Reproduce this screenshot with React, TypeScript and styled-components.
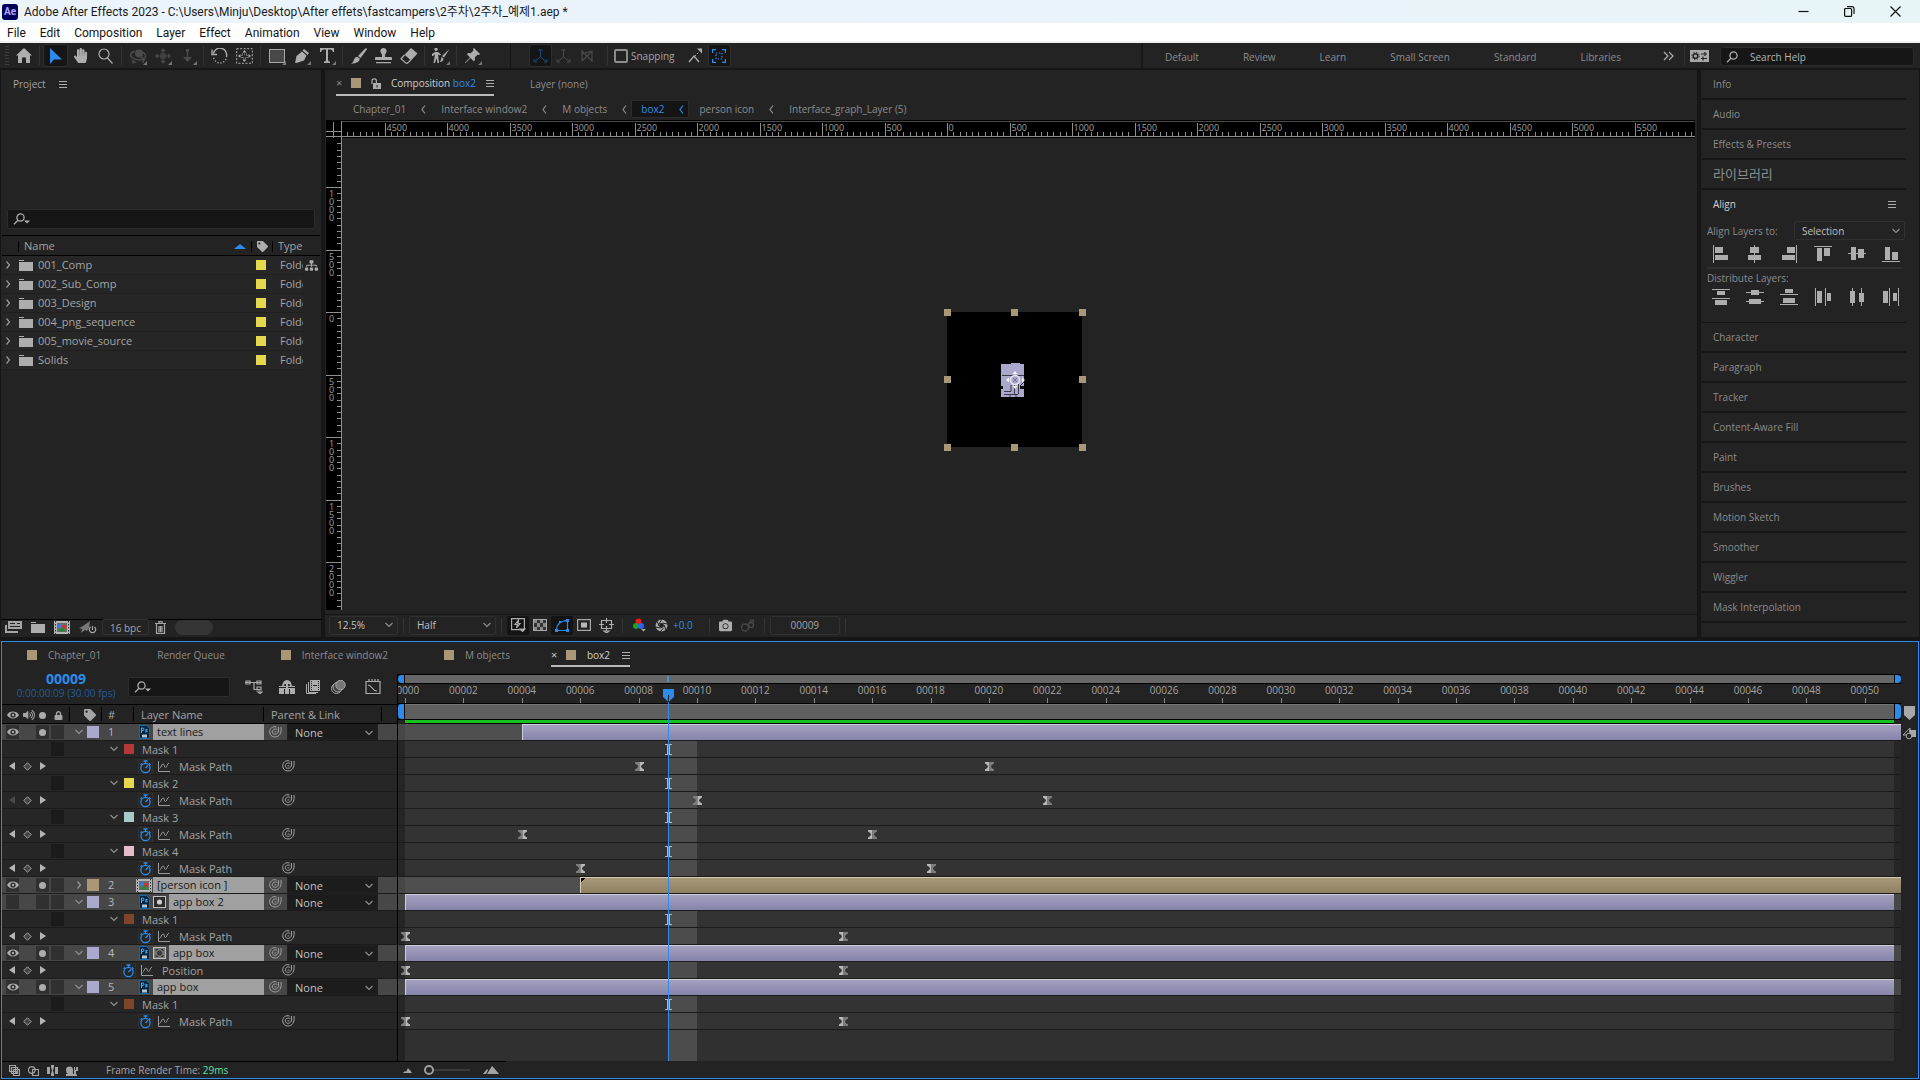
import React from 'react';
import styled, { createGlobalStyle, css } from 'styled-components';
import { FaHandPaper, FaTag, FaLock, FaCamera, FaSitemap, FaVolumeUp } from 'react-icons/fa';

const C = {
  gap: '#161616',
  panel: '#232323',
  row: '#262626',
  line: '#000000',
  field: '#161616',
  edge: '#303030',
  text: '#a4a4a4',
  dim: '#8c8c8c',
  bright: '#d0d0d0',
  icon: '#adadad',
  blue: '#2d8ceb',
  tan: '#a99778',
  lav: '#aaa8cc',
  yellow: '#e5d84e',
};

const Global = createGlobalStyle`
  *, *::before, *::after { box-sizing: border-box; }
  html, body, #root { height: 100%; margin: 0; }
  body { background: ${C.gap}; overflow: hidden; }
  body, button, input, select, table {
    font-family: 'Open Sans', 'Noto Sans CJK KR', sans-serif;
    font-size: 10px;
    line-height: 16px;
    color: ${C.text};
  }
  button { background: none; border: 0; padding: 0; white-space: nowrap; }
  a { color: inherit; text-decoration: none; }
  svg { display: block; flex: none; }
`;

const Shell = styled.div`
  height: 100vh;
  display: grid;
  grid-template-rows: 23px 20px 27px minmax(0, 567fr) 4px minmax(0, 438fr) 1px;
`;

/* ---------- window chrome ---------- */
const TitleBar = styled.header`
  display: flex;
  align-items: center;
  gap: 6px;
  padding: 0 2px;
  background: linear-gradient(90deg, #ebf4f9, #eaf3fb 50%, #e8f5f7);
  color: #1b1b1b;
  font-family: Roboto, 'Noto Sans CJK KR', sans-serif;
  font-size: 12px;
`;
const AppBadge = styled.span`
  width: 16px;
  height: 16px;
  border-radius: 3px;
  background: #00005b;
  color: #b3a6ff;
  font-size: 10px;
  font-weight: 700;
  line-height: 15px;
  text-align: center;
`;
const WinButtons = styled.div`
  margin-left: auto;
  display: flex;
`;
const WinButton = styled.button`
  width: 46px;
  height: 20px;
  display: grid;
  place-items: center;
  color: #111;
`;
const MenuBar = styled.nav`
  display: flex;
  align-items: center;
  gap: 14px;
  padding: 1px 0 0 7px;
  background: #fff;
  border-bottom: 2px solid #f0f1f0;
`;
const MenuItem = styled.button`
  color: #141414;
  font-family: Roboto, sans-serif;
  font-size: 12px;
`;

/* ---------- tool bar ---------- */
const ToolBar = styled.div`
  display: flex;
  align-items: stretch;
  background: ${C.panel};
  border-bottom: 2px solid ${C.gap};
`;
const Grip = styled.span`
  width: 4px;
  margin: 3px 2px 3px 5px;
  background: repeating-linear-gradient(#3c3c3c 0 1px, transparent 1px 3px);
`;
const Tool = styled.button<{ $on?: boolean; $off?: boolean; $more?: boolean; $w?: number }>`
  position: relative;
  width: ${(p) => p.$w || 25}px;
  margin: 1px 0;
  display: grid;
  place-items: center;
  border-radius: 3px;
  color: ${(p) => (p.$off ? '#4a4a4a' : C.icon)};
  ${(p) => p.$on && css`background: #151515; border: 1px solid #2e2e2e;`}
  ${(p) =>
    p.$more &&
    css`
      &::after {
        content: '';
        position: absolute;
        right: 3px;
        bottom: 2px;
        border: 2px solid transparent;
        border-right-color: #777;
        border-bottom-color: #777;
      }
    `}
`;
const Sep = styled.span<{ $full?: boolean }>`
  width: 1px;
  margin: ${(p) => (p.$full ? '0 3px' : '3px 3px')};
  background: ${(p) => (p.$full ? '#171717' : '#333')};
  flex: none;
`;
const Gap = styled.span<{ $w: number }>`
  width: ${(p) => p.$w}px;
  flex: none;
`;
const Snap = styled.label`
  display: flex;
  align-items: center;
  gap: 3px;
  padding: 0 8px 0 3px;
`;
const SnapBox = styled.input`
  appearance: none;
  width: 14px;
  height: 14px;
  margin: 0;
  border: 2px solid #8c8c8c;
  border-radius: 2px;
`;
const Spaces = styled.nav`
  margin-left: auto;
  display: flex;
  align-items: center;
  gap: 44px;
  padding: 2px 40px 0 22px;
  border-left: 2px solid #181818;
  color: ${C.dim};
`;
const HelpSearch = styled.label`
  width: 194px;
  height: 19px;
  margin: 4px 6px 0 7px;
  padding: 0 5px;
  display: flex;
  align-items: center;
  gap: 6px;
  background: ${C.field};
  border: 1px solid #2b2b2b;
  border-radius: 3px;
`;
const Field = styled.input`
  flex: 1;
  min-width: 0;
  padding: 0;
  border: 0;
  outline: 0;
  background: none;
  color: ${C.bright};
  &::placeholder { color: #b4b4b4; opacity: 1; }
`;

/* ---------- upper panels ---------- */
const Upper = styled.main`
  display: grid;
  grid-template-columns: 320px minmax(0, 1fr) 218px;
  gap: 4px;
  padding: 0 1px;
  min-height: 0;
`;
const Panel = styled.section`
  display: flex;
  flex-direction: column;
  min-height: 0;
  min-width: 0;
  background: ${C.panel};
`;
const ProjectHead = styled.div`
  height: 139px;
  padding: 6px 12px;
  display: flex;
  align-items: flex-start;
  gap: 13px;
`;
const MenuDots = styled.button`
  width: 8px;
  height: 16px;
  background: linear-gradient(${C.icon}, ${C.icon}) 0 5px / 8px 1px no-repeat,
    linear-gradient(${C.icon}, ${C.icon}) 0 8px / 8px 1px no-repeat,
    linear-gradient(${C.icon}, ${C.icon}) 0 11px / 8px 1px no-repeat;
`;
const SearchBox = styled.label<{ $w?: number }>`
  ${(p) => (p.$w ? css`width: ${p.$w}px;` : css`margin: 0 6px 6px;`)}
  height: 20px;
  padding: 0 5px;
  display: flex;
  align-items: center;
  background: ${C.field};
  border: 1px solid #2c2c2c;
  border-radius: 2px;
`;
const ProjectTable = styled.table`
  width: calc(100% - 2px);
  margin-left: 1px;
  border-collapse: collapse;
  table-layout: fixed;
  font-size: 11px;
  th {
    height: 20px;
    padding: 1px 5px 0;
    border-top: 1px solid ${C.line};
    border-bottom: 1px solid ${C.line};
    font-size: 11px;
    font-weight: 400;
    text-align: left;
  }
  td {
    height: 19px;
    padding: 0;
    border-bottom: 1px solid #1f1f1f;
    background: ${C.row};
    overflow: hidden;
    white-space: nowrap;
  }
  td:last-child { background: none; border: 0; }
`;
const HeadCell = styled.span<{ $bar?: boolean }>`
  display: flex;
  align-items: center;
  justify-content: space-between;
  height: 11px;
  margin-left: -5px;
  padding-left: ${(p) => (p.$bar ? 5 : 0)}px;
  border-left: 1px solid #000;
`;
const CellLine = styled.span<{ $pad?: number }>`
  display: flex;
  align-items: center;
  gap: 5px;
  padding-left: ${(p) => p.$pad || 0}px;
`;
const Swatch = styled.span<{ $c: string; $s?: number }>`
  display: block;
  width: ${(p) => p.$s || 10}px;
  height: ${(p) => p.$s || 10}px;
  background: ${(p) => p.$c};
  flex: none;
`;
const ProjectFoot = styled.div`
  margin-top: auto;
  height: 18px;
  display: flex;
  align-items: center;
  gap: 9px;
  padding: 0 0 3px 4px;
  border-top: 1px solid #000;
`;
const Depth = styled.button`
  width: 47px;
  height: 16px;
  margin: 0 -3px 0 -4px;
  border: 1px solid #303030;
  border-radius: 2px;
`;
const Pill = styled.span`
  width: 38px;
  height: 15px;
  border-radius: 8px;
  background: #353535;
`;

/* ---------- composition viewer ---------- */
const CompTabs = styled.div`
  height: 28px;
  display: flex;
  padding-left: 11px;
  gap: 36px;
  color: ${C.dim};
`;
const CompTab = styled.div`
  height: 26px;
  display: flex;
  align-items: center;
  gap: 10px;
  padding-top: 2px;
  border-bottom: 2px solid #b9b9b9;
  color: ${C.bright};
  b { font-weight: 400; color: ${C.blue}; }
`;
const PlainTab = styled.button`
  color: ${C.dim};
`;
const Close = styled.button`
  width: 5px;
  font-size: 11px;
  line-height: 12px;
  color: ${C.dim};
`;
const Crumbs = styled.nav`
  height: 22px;
  display: flex;
  align-items: center;
  padding-left: 28px;
  gap: 15px;
  color: ${C.dim};
`;
const HotCrumb = styled.a`
  display: flex;
  align-items: center;
  gap: 15px;
  height: 18px;
  margin: 0 -5px 0 -11px;
  padding: 0 4px 0 9px;
  background: #141414;
  border: 1px solid #2b2b2b;
  border-radius: 2px;
  color: ${C.blue};
`;
const Viewer = styled.div`
  flex: 1;
  min-height: 0;
  margin: 0 2px 4px 1px;
  display: grid;
  grid-template-columns: 16px minmax(0, 1fr);
  grid-template-rows: 17px minmax(0, 1fr);
  border-top: 1px solid #000;
  overflow: hidden;
`;
const RulerCell = styled.div`
  background: #000;
  overflow: hidden;
  min-width: 0;
  min-height: 0;
  text { font-size: 9px; fill: #a0a0a0; font-family: 'Open Sans', sans-serif; }
`;
const Stage = styled.div`
  position: relative;
  overflow: hidden;
`;
const CompFrame = styled.div`
  position: absolute;
  width: 135px;
  height: 135px;
  background: #000;
`;
const Handle = styled.span`
  position: absolute;
  width: 7px;
  height: 7px;
  margin: -3px 0 0 -3px;
  background: ${C.tan};
`;
const Art = styled.svg`
  position: absolute;
  left: 53px;
  top: 50px;
`;
const ViewFoot = styled.div`
  height: 23px;
  display: flex;
  align-items: center;
  padding: 0 0 2px 4px;
  border-top: 1px solid #161616;
`;
const FootSep = styled.span`
  width: 1px;
  height: 15px;
  margin: 0 5px;
  background: #343434;
`;
const Pick = styled.span<{ $w: number; $h?: number; $solid?: boolean }>`
  display: grid;
  align-items: center;
  width: ${(p) => p.$w}px;
  height: ${(p) => p.$h || 19}px;
  background: ${(p) => (p.$solid ? '#1c1c1c' : 'transparent')};
  border: 1px solid ${(p) => (p.$solid ? '#202020' : C.edge)};
  border-radius: ${(p) => (p.$solid ? 0 : 2)}px;
  > * { grid-area: 1 / 1; }
  > svg { justify-self: end; margin-right: 4px; pointer-events: none; }
`;
const Select = styled.select<{ $fs?: number }>`
  appearance: none;
  width: 100%;
  height: 100%;
  padding: 0 7px;
  border: 0;
  outline: 0;
  background: none;
  color: #c0c0c0;
  font-size: ${(p) => p.$fs || 10}px;
`;
const FootBtn = styled.button<{ $on?: boolean }>`
  width: 22px;
  height: 19px;
  display: grid;
  place-items: center;
  border-radius: 2px;
  color: ${C.icon};
  ${(p) => p.$on && css`background: #141414;`}
`;
const Exposure = styled.button`
  margin: 0 11px 0 1px;
  color: ${C.blue};
`;
const FrameBox = styled.button`
  width: 70px;
  height: 19px;
  border: 1px solid ${C.edge};
  border-radius: 2px;
`;

/* ---------- right column ---------- */
const SideList = styled.div`
  margin: 0 13px 0 1px;
`;
const SideItem = styled.button`
  display: block;
  width: 100%;
  height: 30px;
  padding: 0 0 1px 11px;
  text-align: left;
  color: ${C.dim};
  border-bottom: 2px solid ${C.gap};
`;
const SideKorean = styled(SideItem)`
  font-size: 13px;
  font-family: 'Noto Sans CJK KR', sans-serif;
`;
const AlignBox = styled.div`
  height: 133px;
  padding: 6px 0 0 5px;
  border-bottom: 1px solid ${C.gap};
`;
const AlignTop = styled.div`
  display: flex;
  justify-content: space-between;
  padding: 0 10px 0 6px;
  height: 25px;
  color: ${C.bright};
`;
const AlignTo = styled.label`
  display: flex;
  align-items: center;
  justify-content: space-between;
  padding-right: 1px;
  color: ${C.dim};
`;
const IconRow = styled.div`
  display: flex;
  gap: 16px;
  padding: 5px 0 4px 5px;
`;
const IconBtn = styled.button`
  width: 18px;
  height: 18px;
  color: ${C.icon};
`;
const DistLabel = styled.div`
  margin-right: 4px;
  padding-top: 1px;
  height: 16px;
  line-height: 16px;
  border-top: 2px solid #2f2f2f;
  color: ${C.dim};
`;

/* ---------- timeline ---------- */
const Timeline = styled.section`
  margin: 0 1px;
  display: flex;
  flex-direction: column;
  min-height: 0;
  border: 1px solid ${C.blue};
  background: ${C.panel};
`;
const TimeTabs = styled.div`
  height: 32px;
  display: flex;
  gap: 41px;
  padding-left: 10px;
`;
const TimeTab = styled.div<{ $on?: boolean }>`
  height: 25px;
  display: flex;
  align-items: center;
  padding-top: 2px;
  border-bottom: 2px solid ${(p) => (p.$on ? '#b9b9b9' : 'transparent')};
  button { color: ${(p) => (p.$on ? C.bright : C.dim)}; }
  ${Swatch} { margin-right: 11px; }
  ${MenuDots} { margin-left: 12px; }
`;
const CloseSlot = styled.span`
  width: 15px;
`;
const TimeBody = styled.div`
  flex: 1;
  min-height: 0;
  display: grid;
  grid-template-columns: 396px minmax(0, 1fr) 17px;
`;
const LeftCol = styled.div`
  border-right: 1px solid #000;
  display: flex;
  flex-direction: column;
`;
const Controls = styled.div`
  height: 30px;
  display: flex;
  align-items: center;
  padding: 0 0 5px 8px;
`;
const Clock = styled.button`
  width: 112px;
  margin-right: 6px;
  display: block;
  color: #235b99;
  line-height: 15px;
  strong { display: block; font-size: 14px; line-height: 14px; color: ${C.blue}; }
`;
const CtlIcons = styled.div`
  display: flex;
  align-items: center;
  margin-left: 15px;
  color: ${C.icon};
  button { color: inherit; }
`;
const Row = styled.div<{ $layer?: boolean }>`
  height: 17px;
  display: flex;
  align-items: center;
  border-bottom: 1px solid #1b1b1b;
  background: ${(p) => (p.$layer ? '#474747' : C.row)};
  color: ${(p) => (p.$layer ? '#b8b8b8' : C.text)};
  font-size: 11px;
`;
const HeadRow = styled.div`
  height: 20px;
  display: grid;
  grid-template-columns: 68px 32px 32px 130px 118px 1fr;
  align-items: center;
  border-top: 1px solid #000;
  border-bottom: 1px solid #000;
  font-size: 11px;
`;
const HeadPart = styled.span<{ $pad?: number; $gap?: number }>`
  display: flex;
  align-items: center;
  gap: ${(p) => p.$gap || 0}px;
  height: 14px;
  padding: 2px 0 0 ${(p) => p.$pad || 0}px;
  border-right: 1px solid #000;
  color: ${C.text};
`;
const Cell = styled.button<{ $bg?: string; $m?: number }>`
  width: 13px;
  height: 14px;
  margin-left: ${(p) => p.$m || 2}px;
  display: grid;
  place-items: center;
  background: ${(p) => p.$bg || 'transparent'};
  color: ${C.icon};
`;
const Dot = styled.span`
  width: 7px;
  height: 7px;
  border-radius: 50%;
  background: ${C.icon};
`;
const Twisty = styled.button<{ $m: number }>`
  width: 8px;
  margin-left: ${(p) => p.$m}px;
  display: grid;
  place-items: center;
`;
const Num = styled.span`
  width: 37px;
  padding-left: 9px;
`;
const Name = styled.span`
  flex: 1;
  height: 16px;
  padding-left: 4px;
  background: #a0a0a0;
  color: #181818;
  white-space: nowrap;
`;
const NameCol = styled.div<{ $wide?: boolean }>`
  width: 128px;
  padding-left: ${(p) => (p.$wide ? 0 : 3)}px;
  display: flex;
  align-items: center;
  gap: ${(p) => (p.$wide ? 1 : 3)}px;
`;
const PropText = styled.span`
  padding-top: 2px;
`;
const PropKeys = styled.span`
  display: flex;
  align-items: center;
  gap: 8px;
  width: 46px;
  padding-left: 7px;
`;
const Prop = styled.span<{ $indent: number }>`
  width: ${(p) => 234 - p.$indent}px;
  margin-left: ${(p) => p.$indent}px;
  display: flex;
  align-items: center;
  gap: 5px;
  ${PropText} { padding-left: 4px; }
`;
const WatchBox = styled.button`
  width: 15px;
  height: 15px;
  display: grid;
  place-items: center;
  border: 1px solid #303030;
`;

const Foot = styled.div`
  height: 17px;
  display: flex;
  align-items: center;
  width: 504px;
  padding-left: 7px;
  gap: 8px;
  border-top: 1px solid #000;
  em { font-style: normal; color: #5be0a6; }
`;
const FootNote = styled.span`
  width: 290px;
  padding-left: 20px;
  white-space: nowrap;
`;
const Zoom = styled.input`
  appearance: none;
  width: 46px;
  height: 10px;
  margin: 0 5px 0 4px;
  background: linear-gradient(#3a3a3a, #3a3a3a) 0 4px / 100% 2px no-repeat;
  &::-webkit-slider-thumb {
    appearance: none;
    width: 10px;
    height: 10px;
    border: 2px solid #9c9c9c;
    border-radius: 50%;
    background: ${C.panel};
  }
`;

const Tracks = styled.div`
  position: relative;
  display: flex;
  flex-direction: column;
  min-width: 0;
`;
const NavBar = styled.div<{ $h: number; $r: string; $bg: string }>`
  height: ${(p) => p.$h}px;
  display: flex;
  justify-content: space-between;
  border-top: 1px solid #000;
  border-bottom: 1px solid #000;
  background: linear-gradient(90deg, ${C.panel} 6px, transparent 6px calc(100% - 6px), ${C.panel} calc(100% - 6px)), ${(p) => p.$bg};
  overflow: hidden;
  &::before, &::after {
    content: '';
    width: 7px;
    background: ${C.blue};
    border-right: 1px solid #000;
    border-radius: ${(p) => p.$r} 0 0 ${(p) => p.$r};
  }
  &::after {
    border-right: 0;
    border-left: 1px solid #000;
    border-radius: 0 ${(p) => p.$r} ${(p) => p.$r} 0;
  }
`;
const Scale = styled.div`
  position: relative;
  height: 19px;
  overflow: hidden;
`;
const ScaleLane = styled.div`
  position: relative;
  margin: 0 7px;
  height: 100%;
`;
const Stamp = styled.span`
  position: absolute;
  top: 0;
  width: 30px;
  height: 19px;
  margin-left: -15px;
  line-height: 13px;
  text-align: center;
  &::after {
    content: '';
    position: absolute;
    left: 15px;
    bottom: 0;
    width: 1px;
    height: 5px;
    background: #8a8a8a;
  }
`;
const Green = styled.div`
  height: 4px;
  margin: 0 7px;
  background: #14c11f;
  border-bottom: 1px solid #000;
`;
const TrackRow = styled.div<{ $layer?: boolean; $fill?: boolean }>`
  ${(p) => (p.$fill ? css`flex: 1;` : css`height: 17px; border-bottom: 1px solid #1b1b1b;`)}
  padding: 0 7px;
  background: ${(p) => (p.$layer ? '#474747' : p.$fill ? '#232323' : C.row)};
`;
const Lane = styled.div<{ $layer?: boolean; $fill?: boolean }>`
  position: relative;
  height: 100%;
  background: ${(p) => (p.$layer ? '#4f4f4f' : p.$fill ? '#303030' : '#333')};
`;
const Bar = styled.span<{ $tan?: boolean; $over?: boolean }>`
  position: absolute;
  top: 0;
  bottom: 0;
  right: ${(p) => (p.$over ? '-7px' : '0')};
  border-top: 1px solid ${(p) => (p.$tan ? '#d6ccb8' : '#cfcede')};
  border-left: 1px solid ${(p) => (p.$tan ? '#d6ccb8' : '#cfcede')};
  background: ${(p) => (p.$tan ? 'linear-gradient(#a8987a, #8f8062)' : 'linear-gradient(#a3a0bf, #8784ab)')};
`;
const Notch = styled.i`
  display: block;
  width: 5px;
  height: 5px;
  background: linear-gradient(135deg, #000 50%, transparent 50%);
`;
const Shade = styled.span`
  position: absolute;
  top: 0;
  bottom: 0;
  background: #4c4c4c;
`;
const Mark = styled.span`
  position: absolute;
  top: 4px;
  margin-left: -4px;
`;
const BeamMark = styled(Mark)`
  top: 3px;
`;
const Playhead = styled.div`
  position: absolute;
  top: 2px;
  bottom: 0;
  width: 11px;
  margin-left: -5px;
  display: flex;
  flex-direction: column;
  align-items: center;
  &::before { content: ''; width: 2px; height: 6px; margin-bottom: 7px; background: #4c90d2; }
  &::after { content: ''; width: 1px; flex: 1; background: ${C.blue}; }
`;
const RightStrip = styled.div`
  display: flex;
  flex-direction: column;
  align-items: center;
  padding-top: 32px;
  gap: 7px;
`;

/* ---------- small drawings ---------- */
const Chev = ({ c = '#8f8f8f' }: { c?: string }) => (
  <svg width="8" height="6" viewBox="0 0 8 6" fill="none" stroke={c} strokeWidth="1.2"><path d="M.5 1 4 4.500 7.500 1" /></svg>
);
const ChevR = () => (
  <svg width="6" height="8" viewBox="0 0 6 8" fill="none" stroke="#9a9a9a" strokeWidth="1.2"><path d="M1.500.5 4.500 4 1.500 7.500" /></svg>
);
const ChevL = ({ c = '#8f8f8f' }: { c?: string }) => (
  <svg width="5" height="9" viewBox="0 0 5 9" fill="none" stroke={c} strokeWidth="1.2"><path d="M4 .5 1 4.500 4 8.500" /></svg>
);
const Lens = ({ more }: { more?: boolean }) => (
  <svg width="18" height="12" viewBox="0 0 18 12" fill="none" stroke={C.icon} strokeWidth="1.3">
    <circle cx="7.500" cy="4.500" r="3.600" /><path d="M5 7.200 1 11.200" />
    {more && <path d="M11 7.500h6L14 10.500z" fill={C.icon} stroke="none" />}
  </svg>
);
const Whip = () => (
  <svg width="13" height="12" viewBox="0 0 13 12" fill="none" stroke="#a2a2a2" strokeWidth="1">
    <path d="M7.500 1C3.500-.2.7 2.500.7 5.800c0 3.200 2.300 5.200 5.200 5.200 4.200 0 6.900-3.500 6.100-10" />
    <path d="M8.300 3.600C6.500 2.200 3.300 3.200 3.300 5.900c0 3.300 5.700 3.400 6.200-.9.200-1.500 0-2.700-.2-4" />
    <path d="M5.500 5.900h1.800" />
  </svg>
);
const Watch = () => (
  <svg width="13" height="14" viewBox="0 0 13 14" fill="none" stroke={C.blue} strokeWidth="1.3">
    <circle cx="6.500" cy="8" r="4.600" /><path d="M4.500 1h4M6.500 1v2.500M10 3.500l1.500 1.300M6.500 8l2.500-2.500M3 3.500 1.500 4.800" />
  </svg>
);
const Graph = () => (
  <svg width="12" height="11" viewBox="0 0 12 11" fill="none" stroke="#9a9a9a"><path d="M.5 0v10.500H12M1.500 7.500C3 7 3.500 3 5 3s1 3.500 2.500 3.500S9 2.500 11 2" /></svg>
);
const Eye = () => (
  <svg width="12" height="8" viewBox="0 0 12 8"><path d="M0 4C2.500-.6 9.500-.6 12 4 9.500 8.600 2.500 8.600 0 4z" fill={C.icon} /><circle cx="6" cy="4" r="2.600" fill="#262626" /><circle cx="6" cy="4" r="1.200" fill={C.icon} /></svg>
);
const Ps = () => (
  <svg width="11" height="14" viewBox="0 0 11 14">
    <path d="M.5.5h7l3 3v10H.5z" fill="#03253f" stroke="#0c6cae" />
    <path d="M2.500 8V3h1.200a1.200 1.200 0 0 1 0 2.500H2.500M8.500 4.500q-2-.6-2 .4t1.800 1.100q0 1.500-2.200.8" fill="none" stroke="#55b6ff" />
    <path d="M3 9.500h5v3H3z" fill="#b4c4d0" />
  </svg>
);
const CompIcon = () => (
  <svg width="16" height="13" viewBox="0 0 16 13">
    <path d="M0 0h16v13H0z" fill="#b5b5b5" /><path d="M1.500 0v13M14.500 0v13" stroke="#333" strokeDasharray="1.500 1.500" />
    <path d="M3 2h10v9H3z" fill="#6b6b6b" /><circle cx="6" cy="5" r="2.200" fill="#2f7de0" /><path d="M8 4h4v4H8z" fill="#e02b2b" /><path d="m8 5.500 3 5H5z" fill="#17922a" />
  </svg>
);
const Matte = ({ inv }: { inv?: boolean }) => (
  <svg width="13" height="14" viewBox="0 0 13 14">
    <rect x=".5" y="1.500" width="12" height="11" fill={inv ? '#777' : '#2b2b2b'} stroke="#c0c0c0" />
    <circle cx="6.500" cy="7" r="2.600" fill={inv ? '#3b3b3b' : '#d0d0d0'} />
    {inv && <path d="M3 5V3.500h2M8 3.500h2V5M10 9v1.500H8M5 10.500H3V9" fill="none" stroke="#333" />}
  </svg>
);
const Folder = () => (
  <svg width="14" height="11" viewBox="0 0 14 11"><path d="M0 0h5v1H0zM0 2h14v9H0z" fill="#adadad" /></svg>
);
const OpenLock = () => (
  <svg width="10" height="11" viewBox="0 0 10 11"><path d="M1 6V3a2.200 2.200 0 0 1 4.400 0v2" fill="none" stroke={C.icon} strokeWidth="1.200" /><path d="M2 5h8v6H2z" fill={C.icon} /><path d="M5.500 7h1v2.500h-1z" fill="#232323" /></svg>
);
const KeyNav = ({ first }: { first?: boolean }) => (
  <PropKeys>
    <svg width="6" height="8" viewBox="0 0 6 8"><path d="M6 0v8L0 4z" fill={first ? '#4a4a4a' : '#b5b5b5'} /></svg>
    <svg width="9" height="9" viewBox="0 0 9 9"><path d="M4.500.8 8.200 4.500 4.500 8.200.8 4.500z" fill="#444" stroke="#a5a5a5" /></svg>
    <svg width="6" height="8" viewBox="0 0 6 8"><path d="M0 0v8l6-4z" fill="#b5b5b5" /></svg>
  </PropKeys>
);
const Hourglass = ({ half }: { half?: string }) => (
  <svg width="9" height="9" viewBox="0 0 9 9">
    <path d="M0 0h4.500v9H0V7.500Q3 6 3 4.500T0 1.500z" fill={half === 'l' ? '#7d7d7d' : '#b8b8b8'} />
    <path d="M9 0H4.500v9H9V7.500Q6 6 6 4.500T9 1.500z" fill={half === 'r' ? '#7d7d7d' : '#b8b8b8'} />
  </svg>
);
const IBeam = () => (
  <svg width="9" height="11" viewBox="0 0 9 11" fill="none" stroke="#b5b5b5"><path d="M1 .5h7M1 10.500h7M3.500.5v10M5.500.5v10" /></svg>
);
const Axis = ({ c }: { c: string }) => (
  <svg width="15" height="15" viewBox="0 0 15 15" fill="none" stroke={c}><path d="M7.500 1v8M7.500 9 1.500 13.500M7.500 9l6 4.500M5.500 3l2-2 2 2M1 11v3h3M14 11v3h-3" /></svg>
);

const Box = ({ d, w = 16, h = 16, fill }: { d: string; w?: number; h?: number; fill?: boolean }) => (
  <svg width={w} height={h} viewBox={`0 0 ${w} ${h}`} fill={fill ? 'currentColor' : 'none'} stroke={fill ? 'none' : 'currentColor'} strokeWidth="1.200">
    <path d={d} />
  </svg>
);

/* ---------- data ---------- */
const FRAMES = 51;
const at = (f: number) => `${(f / FRAMES) * 100}%`;

type Item =
  | { kind: 'layer'; n: number; name: string; color: string; from: number; over?: boolean; comp?: boolean; matte?: 'on' | 'inv'; hidden?: boolean; closed?: boolean }
  | { kind: 'mask'; name: string; color: string }
  | { kind: 'prop'; name: string; keys: number[]; first?: boolean; shallow?: boolean };

const items: Item[] = [
  { kind: 'layer', n: 1, name: 'text lines', color: C.lav, from: 4, over: true },
  { kind: 'mask', name: 'Mask 1', color: '#b53839' },
  { kind: 'prop', name: 'Mask Path', keys: [8, 20] },
  { kind: 'mask', name: 'Mask 2', color: C.yellow },
  { kind: 'prop', name: 'Mask Path', keys: [10, 22], first: true },
  { kind: 'mask', name: 'Mask 3', color: '#a9cbc7' },
  { kind: 'prop', name: 'Mask Path', keys: [4, 16] },
  { kind: 'mask', name: 'Mask 4', color: '#e5bcc9' },
  { kind: 'prop', name: 'Mask Path', keys: [6, 18] },
  { kind: 'layer', n: 2, name: '[person icon ]', color: C.tan, from: 6, over: true, comp: true, closed: true },
  { kind: 'layer', n: 3, name: 'app box 2', color: C.lav, from: 0, matte: 'on', hidden: true },
  { kind: 'mask', name: 'Mask 1', color: '#7f452a' },
  { kind: 'prop', name: 'Mask Path', keys: [0, 15] },
  { kind: 'layer', n: 4, name: 'app box', color: C.lav, from: 0, matte: 'inv' },
  { kind: 'prop', name: 'Position', keys: [0, 15], shallow: true },
  { kind: 'layer', n: 5, name: 'app box', color: C.lav, from: 0 },
  { kind: 'mask', name: 'Mask 1', color: '#7f452a' },
  { kind: 'prop', name: 'Mask Path', keys: [0, 15] },
];

const folders = ['001_Comp', '002_Sub_Comp', '003_Design', '004_png_sequence', '005_movie_source', 'Solids'];
const menus = ['File', 'Edit', 'Composition', 'Layer', 'Effect', 'Animation', 'View', 'Window', 'Help'];
const spaces = ['Default', 'Review', 'Learn', 'Small Screen', 'Standard', 'Libraries'];
const sideTop = ['Info', 'Audio', 'Effects & Presets'];
const sideRest = ['Character', 'Paragraph', 'Tracker', 'Content-Aware Fill', 'Paint', 'Brushes', 'Motion Sketch', 'Smoother', 'Wiggler', 'Mask Interpolation'];

const alignIcons = [
  'M1 0h1v18H1zM3 2h8v6H3zM3 10h13v5H3z',
  'M8 0h1v18H8zM4 2h9v6H4zM2 10h13v5H2z',
  'M16 0h1v18h-1zM7 2h8v6H7zM2 10h13v5H2z',
  'M0 1h18v1H0zM3 3h5v13H3zM10 3h6v8h-6z',
  'M0 8h18v1H0zM3 2h5v13H3zM10 4h6v9h-6z',
  'M0 16h18v1H0zM3 2h5v13H3zM10 7h6v8h-6z',
];
const distIcons = [
  'M0 1h18v1H0zM5 3h8v4H5zM0 10h18v1H0zM3 12h12v5H3z',
  'M0 4h18v1H0zM5 2h8v5H5zM0 13h18v1H0zM3 11h12v5H3z',
  'M0 6h18v1H0zM5 1h8v4H5zM0 16h18v1H0zM3 10h12v5H3z',
  'M1 0h1v18H1zM3 3h5v12H3zM11 0h1v18h-1zM13 5h4v8h-4z',
  'M4 0h1v18H4zM2 3h5v12H2zM13 0h1v18h-1zM11 5h5v9h-5z',
  'M7 0h1v18H7zM1 3h5v12H1zM16 0h1v18h-1zM11 5h4v8h-4z',
];

/* 12.5% magnification: 500 comp pixels are 62.5 screen pixels */
const ORIGIN_X = 605;
const ORIGIN_Y = 174;
const STEP = 62.5;

const TopRuler = () => (
  <svg width="1360" height="17">
    {Array.from({ length: 216 }, (_, i) => i - 96).map((k) => {
      const x = Math.round(ORIGIN_X + (k * STEP) / 10) + 0.5;
      const major = k % 10 === 0;
      return (
        <g key={k}>
          <path d={`M${x} ${major ? 2 : 11}V15`} stroke="#8f8f8f" />
          {major && <text x={x + 1} y="10">{Math.abs(k * 50)}</text>}
        </g>
      );
    })}
    <path d="M0 .5H1360" stroke="#4a4a4a" />
    <path d="M0 15.500H1360" stroke="#8f8f8f" />
  </svg>
);
const SideRuler = () => (
  <svg width="16" height="472">
    {Array.from({ length: 75 }, (_, i) => i - 27).map((k) => {
      const y = Math.round(ORIGIN_Y + (k * STEP) / 10) + 0.5;
      const major = k % 10 === 0;
      return (
        <g key={k}>
          <path d={`M${major ? 0 : 11} ${y}H15`} stroke="#8f8f8f" />
          {major && String(Math.abs(k * 50)).split('').map((ch, j) => <text key={j} x="3" y={y + 9 + j * 8}>{ch}</text>)}
        </g>
      );
    })}
    <path d="M15.500 0V472" stroke="#8f8f8f" />
  </svg>
);

function LayerRow({ it }: { it: Item }) {
  if (it.kind === 'layer') {
    return (
      <Row $layer>
        <Cell $m={4} $bg="#303030" aria-label="Visibility">{!it.hidden && <Eye />}</Cell>
        <Cell aria-label="Audio" />
        <Cell $bg="#303030" aria-label="Solo">{!it.hidden && <Dot />}</Cell>
        <Cell $bg="#303030" aria-label="Lock" />
        <Twisty $m={11} aria-label="Expand">{it.closed ? <ChevR /> : <Chev />}</Twisty>
        <Gap $w={4} />
        <Swatch $c={it.color} $s={12} />
        <Num>{it.n}</Num>
        <NameCol $wide={it.comp}>
          {it.comp ? <CompIcon /> : <Ps />}
          {it.matte && <Matte inv={it.matte === 'inv'} />}
          <Name>{it.name}</Name>
        </NameCol>
        <Gap $w={5} />
        <Whip />
        <Gap $w={5} />
        <Pick $w={91} $h={16} $solid>
          <Select $fs={11} aria-label={`Parent of ${it.name}`}><option>None</option></Select>
          <Chev />
        </Pick>
      </Row>
    );
  }
  if (it.kind === 'mask') {
    return (
      <Row>
        <Cell $m={49} $bg="#1b1b1b" aria-label="Lock" />
        <Twisty $m={46} aria-label="Collapse"><Chev /></Twisty>
        <Gap $w={6} />
        <Swatch $c={it.color} />
        <Gap $w={8} />
        <PropText>{it.name}</PropText>
      </Row>
    );
  }
  return (
    <Row>
      <KeyNav first={it.first} />
      <Prop $indent={it.shallow ? 73 : 90}>
        <WatchBox aria-label="Stopwatch"><Watch /></WatchBox>
        <Graph />
        <PropText>{it.name}</PropText>
      </Prop>
      <Whip />
    </Row>
  );
}

function TrackLine({ it }: { it: Item }) {
  const layer = it.kind === 'layer';
  return (
    <TrackRow $layer={layer}>
      <Lane $layer={layer}>
        {it.kind === 'layer' && (
          <Bar $tan={it.comp} $over={it.over} style={{ left: at(it.from) }}>{it.comp && <Notch />}</Bar>
        )}
        {!layer && <Shade style={{ left: at(9), width: at(1) }} />}
        {it.kind === 'mask' && <BeamMark style={{ left: at(9) }}><IBeam /></BeamMark>}
        {it.kind === 'prop' &&
          it.keys.map((k, i) => (
            <Mark key={k} style={{ left: at(k) }}><Hourglass half={i ? 'r' : 'l'} /></Mark>
          ))}
      </Lane>
    </TrackRow>
  );
}

export default function App() {
  return (
    <Shell>
      <Global />
      <TitleBar>
        <AppBadge>Ae</AppBadge>
        <span>{'Adobe After Effects 2023 - C:\\Users\\Minju\\Desktop\\After effets\\fastcampers\\2주차\\2주차_예제1.aep *'}</span>
        <WinButtons>
          <WinButton aria-label="Minimize"><Box w={11} h={11} d="M.5 5.500h10" /></WinButton>
          <WinButton aria-label="Restore"><Box w={11} h={11} d="M.6 3.500a1 1 0 0 1 1-1h5a1 1 0 0 1 1 1v5.900a1 1 0 0 1-1 1h-5a1 1 0 0 1-1-1zM3 .6h5q2 0 2 2v5.400" /></WinButton>
          <WinButton aria-label="Close"><Box w={11} h={11} d="M.5.5l10 10M10.500.5l-10 10" /></WinButton>
        </WinButtons>
      </TitleBar>
      <MenuBar>{menus.map((m) => <MenuItem key={m}>{m}</MenuItem>)}</MenuBar>

      <ToolBar>
        <Grip />
        <Tool aria-label="Home"><Box w={16} h={15} fill d="M8 0l8 7.500h-2V15h-4V9.500H6V15H2V7.500H0z" /></Tool>
        <Sep />
        <Tool $on aria-label="Selection"><svg width="12" height="16" viewBox="0 0 12 16"><path d="M0 0v16l4-4.500h8z" fill={C.blue} /></svg></Tool>
        <Tool aria-label="Hand"><FaHandPaper size={15} /></Tool>
        <Tool aria-label="Zoom"><Box d="M11 6A5 5 0 1 1 1 6a5 5 0 0 1 10 0zM9.500 10l5 5.500" /></Tool>
        <Sep />
        <Tool $off $more aria-label="Orbit">
          <svg width="18" height="16" viewBox="0 0 18 16" fill="none" stroke="currentColor" strokeWidth="1.500"><path d="M6 3.500C1 4 .5 8 3.500 10s8 2.500 11 1M13 4c3.500 1.500 4.500 4 2.500 6M3 12.500 6 14l-3 1M12 9l3.500 2-2 4" /><circle cx="10" cy="5.500" r="4" fill="currentColor" stroke="none" /></svg>
        </Tool>
        <Tool $off $more aria-label="Pan camera"><Box d="M8 1v14M1 8h14M6 3l2-2 2 2M6 13l2 2 2-2M3 6 1 8l2 2M13 6l2 2-2 2M6 6h4v4H6z" /></Tool>
        <Tool $off $more aria-label="Dolly"><Box w={11} h={15} fill d="M4 1h3v2.500H4zM4.800 3.500h1.400V9H10l-4.500 5L1 9h3.800z" /></Tool>
        <Sep />
        <Tool aria-label="Rotation">
          <svg width="17" height="16" viewBox="0 0 17 16" fill="none" stroke="currentColor" strokeWidth="1.400"><path d="M2.500 5.500a6.500 6.500 0 0 1 13 2.500" /><path d="M15.500 8a6.500 6.500 0 0 1-13 1" strokeDasharray="1.200 1.800" /><path d="M1 1.500v5h5" /></svg>
        </Tool>
        <Tool aria-label="Pan behind">
          <svg width="17" height="16" viewBox="0 0 17 16"><rect x=".7" y=".7" width="15.600" height="14.600" fill="none" stroke="currentColor" strokeDasharray="2 1.500" /><path d="m8.500 2 2 2.500h-4zM8.500 14l2-2.500h-4zM2 8l2.500-2v4zM15 8l-2.500-2v4z" fill="currentColor" /><path d="M6 6h5v4H6z" fill="none" stroke="currentColor" strokeDasharray="1 1" /></svg>
        </Tool>
        <Sep />
        <Tool $more aria-label="Rectangle"><svg width="16" height="14"><rect x=".5" y=".5" width="15" height="13" fill="#484848" stroke="#a8a8a8" /></svg></Tool>
        <Tool $more aria-label="Pen">
          <svg width="16" height="16" viewBox="0 0 16 16"><path d="M10 1l5 4-1.500 2-5-4.500zM8 3.500l4.500 4L10 12.500 2.500 15l-.5-.6 4-4.400a1.200 1.200 0 1 1 .8.600L3 14.500 1 15l1.500-7z" fill="currentColor" /></svg>
        </Tool>
        <Tool $more aria-label="Type"><Box w={14} h={15} fill d="M0 0h14v4h-1q-.5-2.500-2.500-2.500H8V12q0 1.500 2 1.500V15H4v-1.500q2 0 2-1.500V1.500H3.500Q1.500 1.500 1 4H0z" /></Tool>
        <Sep />
        <Tool aria-label="Brush"><Box fill d="M15.500.3q.7.500.2 1.400L9.500 10 7 8 14 .7q.8-.8 1.500-.4zM6.300 8.800l2.500 2Q8.500 15.500 0 15.800 2.500 14.500 3 11.500q.8-2.500 3.300-2.700z" /></Tool>
        <Tool aria-label="Clone stamp"><Box w={17} fill d="M8.500 0a3 3 0 0 1 2.700 4.500Q9.700 6.500 10 9h6q1 0 1 1v2H0v-2q0-1 1-1h6q.3-2.500-1.200-4.500A3 3 0 0 1 8.500 0zM1 14h15v1.300H1z" /></Tool>
        <Tool aria-label="Eraser">
          <svg width="18" height="16" viewBox="0 0 18 16"><path d="M11 0l6.500 5.500-6.500 7-6.500-5.800z" fill="currentColor" /><path d="M4.500 7 1 10.800l5 4.400h1.500L10.800 12" fill="none" stroke="currentColor" strokeWidth="1.200" /></svg>
        </Tool>
        <Sep />
        <Tool $more aria-label="Roto brush">
          <svg width="19" height="16" viewBox="0 0 19 16"><path d="M5 3a1.700 1.700 0 1 1 .1 0zM1 8V6l3-2h3l3 2.500-1 1L7 6.500 8 15H6.500L5.500 10 4 15H2.500L4 6.500 2.500 7v1z" fill="currentColor" /><path d="M18.500 1 13 9.500 11 8zM10.500 9l2 1.500Q12 14 8.500 14q2-2 2-5z" fill="currentColor" /></svg>
        </Tool>
        <Sep />
        <Tool $more aria-label="Puppet pin"><Box w={15} h={15} fill d="M9 0l6 6-1 1-1.500-.3-2.800 2.900L10 12l-1.200 1.200-3.300-3.300L.5 15 0 14.500l5-5L2 6.300 3.200 5l2.400.3 2.900-2.800L8 1z" /></Tool>
        <Gap $w={22} />
        <Sep $full />
        <Gap $w={15} />
        <Tool $on $w={23} aria-label="Local axis"><Axis c="#1b4a7a" /></Tool>
        <Tool $off $w={23} aria-label="World axis"><Axis c="#4a4a4a" /></Tool>
        <Tool $off $w={23} aria-label="View axis"><Box w={14} h={14} d="M2 1v11M2 5l10-3v10L2 2M2 12l9-9" /></Tool>
        <Gap $w={6} />
        <Sep />
        <Snap><SnapBox type="checkbox" />Snapping</Snap>
        <Tool aria-label="Snap edges">
          <svg width="15" height="15" viewBox="0 0 15 15"><path d="M1 14l5-6 5 6" fill="none" stroke="currentColor" strokeWidth="1.400" /><path d="M7 8l4-4" stroke="currentColor" strokeDasharray="1.500 1.500" /><path d="M9 .5h5v5z" fill="currentColor" /></svg>
        </Tool>
        <Tool $on $w={23} aria-label="Snap features">
          <svg width="14" height="14" viewBox="0 0 14 14" fill="none" stroke={C.blue} strokeWidth="1.200"><path d="M.6 4V.6H4M10 .6h3.400V4M13.400 10v3.400H10M4 13.400H.6V10" /><path d="M4 4h6v6H4z" strokeDasharray="1.500 1.500" /></svg>
        </Tool>
        <Spaces>{spaces.map((s) => <a href="#" key={s}>{s}</a>)}</Spaces>
        <Tool $w={16} aria-label="More workspaces"><Box w={12} h={10} d="M1 1l4 4-4 4M6 1l4 4-4 4" /></Tool>
        <Gap $w={4} />
        <Sep />
        <Gap $w={1} />
        <Tool $w={20} aria-label="Workspace settings">
          <svg width="19" height="12" viewBox="0 0 19 12"><path d="M0 0h19v12H0z" fill="#a8a8a8" /><circle cx="5.500" cy="6" r="2.300" fill="none" stroke="#222" strokeWidth="1.500" /><circle cx="5.500" cy="6" r="3.700" fill="none" stroke="#222" strokeWidth="1" strokeDasharray="1.400 1.500" /><path d="M11 4h6M15 2v4M11 8.500h6M13 6.500v4" stroke="#222" strokeWidth="1.200" /></svg>
        </Tool>
        <Gap $w={4} />
        <HelpSearch><Lens /><Field placeholder="Search Help" aria-label="Search Help" /></HelpSearch>
      </ToolBar>

      <Upper>
        <Panel>
          <ProjectHead>Project<MenuDots aria-label="Project menu" /></ProjectHead>
          <SearchBox><Lens more /><Field aria-label="Search project" /></SearchBox>
          <ProjectTable>
            <colgroup><col style={{ width: 16 }} /><col /><col style={{ width: 21 }} /><col style={{ width: 31 }} /><col style={{ width: 17 }} /></colgroup>
            <thead>
              <tr>
                <th />
                <th><HeadCell $bar>Name<svg width="12" height="5"><path d="M0 5h12L6 0z" fill={C.blue} /></svg></HeadCell></th>
                <th><HeadCell $bar><FaTag size={11} color={C.icon} /></HeadCell></th>
                <th><HeadCell $bar>Type</HeadCell></th>
                <th />
              </tr>
            </thead>
            <tbody>
              {folders.map((f, i) => (
                <tr key={f}>
                  <td><Twisty $m={2} aria-label={`Open ${f}`}><ChevR /></Twisty></td>
                  <td><CellLine $pad={1}><Folder />{f}</CellLine></td>
                  <td><CellLine $pad={5}><Swatch $c={C.yellow} /></CellLine></td>
                  <td><CellLine $pad={8}>Folder</CellLine></td>
                  <td><CellLine $pad={2}>{i === 0 && <FaSitemap size={13} color={C.icon} />}</CellLine></td>
                </tr>
              ))}
            </tbody>
          </ProjectTable>
          <ProjectFoot>
            <Box w={17} h={12} fill d="M3 0h14v8H3zM5 2v1h5V2zM5 5v1h10V5zM12 2v1h3V2zM0 4h2v6h11v2H0z" />
            <Folder />
            <CompIcon />
            <svg width="18" height="13" viewBox="0 0 18 13"><path d="M11 0 4 5 0 7l3 1-1 4 4-3 2 1 2-3z" fill="#777" /><path d="M11.500 6a3.200 3.200 0 1 0 4 0M13.500 5v4" fill="none" stroke="#a8a8a8" strokeWidth="1.200" /></svg>
            <Depth>16 bpc</Depth>
            <Box w={11} h={13} d="M0 2.500h11M4 2V.6h3V2M1.500 3v9.400h8V3M4 5v6M5.500 5v6M7 5v6" />
            <Pill />
          </ProjectFoot>
        </Panel>

        <Panel>
          <CompTabs>
            <CompTab>
              <Close aria-label="Close tab">×</Close>
              <Swatch $c={C.tan} />
              <OpenLock />
              <span>Composition <b>box2</b></span>
              <MenuDots aria-label="Composition menu" />
            </CompTab>
            <PlainTab>Layer (none)</PlainTab>
          </CompTabs>
          <Crumbs>
            <a href="#">Chapter_01</a><ChevL /><a href="#">Interface window2</a><ChevL /><a href="#">M objects</a><ChevL />
            <HotCrumb href="#">box2<ChevL c={C.blue} /></HotCrumb>
            <a href="#">person icon</a><ChevL /><a href="#">Interface_graph_Layer (5)</a>
          </Crumbs>
          <Viewer>
            <RulerCell><svg width="16" height="17" fill="none" stroke="#8f8f8f"><path d="M0 10.500h16M7.500 1v16M15.500 0v17M0 15.500h16" /></svg></RulerCell>
            <RulerCell><TopRuler /></RulerCell>
            <RulerCell><SideRuler /></RulerCell>
            <Stage>
              <CompFrame style={{ left: ORIGIN_X, top: ORIGIN_Y }}>
                {[0, 67, 135].map((x) => [0, 67, 135].map((y) => (x === 67 && y === 67 ? null : <Handle key={`${x}-${y}`} style={{ left: x, top: y }} />)))}
                <Art width="26" height="36" viewBox="0 0 26 36">
                  <path d="M1 2h10V1h9v1h4v33H1z" fill="#aaa8cc" />
                  <path d="M2 13.500h22M4 29.500h7V23M4 32.500h14M14.500 22v10M18.500 22v10M10 35v-2M16 35v-2M24 20l-4 4" stroke="#3a3a48" fill="none" />
                  <path d="M1 24h2v3H1zM20 24h4v3h-4z" fill="#111" />
                  <circle cx="15" cy="18" r="4.500" fill="none" stroke="#e8e8ee" strokeWidth="1.500" />
                  <path d="M15 9l2.500 3h-5zM15 27l2.500-3h-5zM6 18l3-2.500v5zM25 18l-3-2.500v5z" fill="#f4f4f8" />
                  <path d="M13 20l4-4M13 16l4 4" stroke="#77778a" />
                </Art>
              </CompFrame>
            </Stage>
          </Viewer>
          <ViewFoot>
            <Pick $w={69}><Select aria-label="Magnification"><option>12.5%</option></Select><Chev /></Pick>
            <FootSep />
            <Pick $w={87}><Select aria-label="Resolution"><option>Half</option></Select><Chev /></Pick>
            <FootSep />
            <FootBtn $on aria-label="Fast previews"><Box w={15} h={14} d="M.6.6h12.800v11H.6zM7.500 2 4 6.500h2.500L5.500 10 9 5.500H7zM9 11h5l-2.500 2.500z" /></FootBtn>
            <FootBtn aria-label="Transparency grid">
              <svg width="14" height="12" viewBox="0 0 14 12"><rect x=".5" y=".5" width="13" height="11" fill="#333" stroke="#a8a8a8" /><path d="M1 1h3v3H1zM7 1h3v3H7zM4 4h3v4H4zM10 4h3v4h-3zM1 8h3v3H1zM7 8h3v3H7z" fill="#8a8a8a" /></svg>
            </FootBtn>
            <FootBtn $on aria-label="Mask visibility">
              <svg width="14" height="13" viewBox="0 0 14 13" fill="none" stroke={C.blue} strokeWidth="1.200"><path d="M1.500 11.500C1.500 6 4 2 12.500 1.500v10z" /><path d="M0 10h3v3H0zM11 10h3v3h-3zM11 0h3v3h-3zM4 2h2v2H4z" fill={C.blue} stroke="none" /></svg>
            </FootBtn>
            <FootBtn aria-label="Region of interest">
              <svg width="14" height="12" viewBox="0 0 14 12"><rect x=".6" y=".6" width="12.800" height="10.800" fill="none" stroke="#a8a8a8" strokeWidth="1.200" /><path d="M4 3.500h6v5H4z" fill="#b8b8b8" /></svg>
            </FootBtn>
            <FootBtn aria-label="Guides"><Box w={15} h={15} d="M2.500 2.500h10v8h-10zM7.500 0v5M7.500 8v5M0 6.500h5M10 6.500h5M5 13h5l-2.500 2z" /></FootBtn>
            <FootSep />
            <FootBtn aria-label="Channels"><svg width="13" height="14" viewBox="0 0 13 14"><circle cx="5.500" cy="3.500" r="3" fill="#f01818" /><circle cx="3" cy="8" r="3" fill="#12a81a" /><circle cx="8" cy="8" r="3" fill="#3262f0" /><path d="M8 11h5l-2.500 2.500z" fill="#a8a8a8" /></svg></FootBtn>
            <FootBtn aria-label="Reset exposure"><svg width="13" height="13" viewBox="0 0 13 13" fill="none" stroke="#a8a8a8"><circle cx="6.500" cy="6.500" r="4.200" strokeWidth="3.500" /><path d="M7 0 4 5M12.500 5 7.500 4M11 11 9 6M5 13l3.500-4M.5 8l5 1M2 2l2 5" stroke="#232323" /></svg></FootBtn>
            <Exposure>+0.0</Exposure>
            <FootSep />
            <FootBtn aria-label="Snapshot"><FaCamera size={13} /></FootBtn>
            <FootBtn aria-label="Show snapshot"><svg width="15" height="13" viewBox="0 0 15 13" fill="none" stroke="#454545" strokeWidth="1.500"><circle cx="5" cy="8.500" r="3.500" /><circle cx="11" cy="6" r="2.500" /><circle cx="12" cy="2.500" r="1.500" /></svg></FootBtn>
            <FootSep />
            <FrameBox>00009</FrameBox>
            <FootSep />
          </ViewFoot>
        </Panel>

        <Panel>
          <SideList>
            {sideTop.map((s) => <SideItem key={s}>{s}</SideItem>)}
            <SideKorean>라이브러리</SideKorean>
            <AlignBox>
              <AlignTop>Align<MenuDots aria-label="Align menu" /></AlignTop>
              <AlignTo>Align Layers to:
                <Pick $w={111}><Select><option>Selection</option></Select><Chev /></Pick>
              </AlignTo>
              <IconRow>{alignIcons.map((d, i) => <IconBtn key={i} aria-label={`Align ${i + 1}`}><Box w={18} h={18} fill d={d} /></IconBtn>)}</IconRow>
              <DistLabel>Distribute Layers:</DistLabel>
              <IconRow>{distIcons.map((d, i) => <IconBtn key={i} aria-label={`Distribute ${i + 1}`}><Box w={18} h={18} fill d={d} /></IconBtn>)}</IconRow>
            </AlignBox>
            {sideRest.map((s) => <SideItem key={s}>{s}</SideItem>)}
          </SideList>
        </Panel>
      </Upper>

      <span />

      <Timeline>
        <TimeTabs>
          <TimeTab><CloseSlot /><Swatch $c={C.tan} /><button>Chapter_01</button></TimeTab>
          <TimeTab><CloseSlot /><button>Render Queue</button></TimeTab>
          <TimeTab><CloseSlot /><Swatch $c={C.tan} /><button>Interface window2</button></TimeTab>
          <TimeTab><CloseSlot /><Swatch $c={C.tan} /><button>M objects</button></TimeTab>
          <TimeTab $on><CloseSlot><Close aria-label="Close tab">×</Close></CloseSlot><Swatch $c={C.tan} /><button>box2</button><MenuDots aria-label="Timeline menu" /></TimeTab>
        </TimeTabs>
        <TimeBody>
          <LeftCol>
            <Controls>
              <Clock><strong>00009</strong>0:00:00:09 (30.00 fps)</Clock>
              <SearchBox $w={102}><Lens more /><Field aria-label="Search layers" /></SearchBox>
              <CtlIcons>
                <button aria-label="Mini flowchart"><Box w={18} h={14} d="M0 2.500h5M5 2.500h11M9 2.500v7h6M1 1h4v3H1zM12 1h4v3h-4zM12 7h4v3h-4zM13 12h4l-2 1.500z" /></button>
                <Gap $w={16} />
                <button aria-label="Shy"><Box w={16} h={14} fill d="M0 6h16v1H0zM0 8h16v6h-5V9h-1v5H6V9H5v5H0zM7 3h2v6H7zM3 6q1-6 5-6t5 6h-2l-.5-2h-5L5 6z" /></button>
                <Gap $w={11} />
                <button aria-label="Frame blending"><svg width="14" height="14" viewBox="0 0 14 14"><path d="M4 0h10v11H4z" fill="currentColor" /><path d="M5.500 1v9M12.500 1v9" stroke="#232323" strokeDasharray="1 1" /><path d="M7 5.500h4" stroke="#232323" /><path d="M2.500 2v10.500H12M.5 4v9.500H10" fill="none" stroke="currentColor" /></svg></button>
                <Gap $w={11} />
                <button aria-label="Motion blur"><svg width="15" height="14" viewBox="0 0 15 14" stroke="#a8a8a8"><circle cx="5.500" cy="8.500" r="5" fill="none" /><circle cx="7" cy="7" r="5" fill="#444" /><circle cx="9.500" cy="5" r="4.700" fill="#777" /></svg></button>
                <Gap $w={19} />
                <button aria-label="Graph editor"><Box w={16} h={15} d="M1 2.500h14v12H1zM3 6c4 0 4 6 9 6M4 0v3M7 0v3M10 0v3M13 0v3" /></button>
              </CtlIcons>
            </Controls>
            <HeadRow>
              <HeadPart $pad={5} $gap={4}><Eye /><FaVolumeUp size={12} /><Dot /><Gap $w={0} /><FaLock size={9} /></HeadPart>
              <HeadPart $pad={14}><FaTag size={12} /></HeadPart>
              <HeadPart $pad={6}>#</HeadPart>
              <HeadPart $pad={7}>Layer Name</HeadPart>
              <HeadPart $pad={7}>Parent &amp; Link</HeadPart>
            </HeadRow>
            {items.map((it, i) => <LayerRow key={i} it={it} />)}
          </LeftCol>
          <Tracks>
            <NavBar $h={10} $r="6px" $bg="#676767" />
            <Scale>
              <ScaleLane>
                {Array.from({ length: 26 }, (_, i) => i * 2).map((f) => (
                  <Stamp key={f} style={{ left: at(f) }}>{String(f).length > 1 ? `000${f}` : `0000${f}`}</Stamp>
                ))}
              </ScaleLane>
            </Scale>
            <NavBar $h={17} $r="4px" $bg="linear-gradient(#757575 0 1px, #5f5f5f 1px)" />
            <Green />
            {items.map((it, i) => <TrackLine key={i} it={it} />)}
            <TrackRow $fill><Lane $fill><Shade style={{ left: at(9), width: at(1) }} /></Lane></TrackRow>
            <Playhead style={{ left: `calc(7px + (100% - 14px) * ${9 / FRAMES})` }}>
              <svg width="11" height="13" viewBox="0 0 11 13"><path d="M0 0h11v8l-5.500 5L0 8z" fill={C.blue} /><path d="M5.500 6v7" stroke="#232323" /></svg>
            </Playhead>
          </Tracks>
          <RightStrip>
            <svg width="11" height="14"><path d="M0 0h11v9l-5.500 5L0 9z" fill="#a8a8a8" /></svg>
            <svg width="15" height="13" viewBox="0 0 15 13"><path d="M7 3h7v7H8z" fill="#a8a8a8" /><path d="M1 8 8 1v5M1 8h5" fill="none" stroke="#a8a8a8" /><circle cx="7" cy="9" r="2.800" fill="#232323" stroke="#a8a8a8" /></svg>
          </RightStrip>
        </TimeBody>
        <Foot>
          <Box w={11} h={11} d="M.5.5h6v6h-6zM2.500 2.500h6v6h-6zM4.500 4.500h6v6h-6zM7.500 6v3M6 7.500h3" />
          <Box w={11} h={11} d="M7 4A3.400 3.400 0 1 1 .5 4 3.400 3.400 0 0 1 7 4zM4.500 4.500h6v6h-6z" />
          <Box w={11} h={11} fill d="M0 2h3v7H0zM8 2h3v7H8zM4 0h3v2l-1 3.500L7 9v2H4V9l1-3.500L4 2z" />
          <Box w={12} h={11} fill d="M0 5a3.500 3.500 0 0 1 7 0v4h1V2h1v3h1V2h2v4h-2v3l1 1v1H0V9h2q-2-1-2-4z" />
          <FootNote>Frame Render Time: <em>29ms</em></FootNote>
          <Gap $w={11} />
          <Box w={9} h={5} fill d="M0 5l2-2 1 1 2-4 1.500 2L7 2l2 3z" />
          <Zoom type="range" min={0} max={100} defaultValue={0} aria-label="Timeline zoom" />
          <Box w={16} h={8} fill d="M4 8l5-8 2 2 5 6zM0 8l4-5 1 1-2 4z" />
        </Foot>
      </Timeline>
    </Shell>
  );
}
